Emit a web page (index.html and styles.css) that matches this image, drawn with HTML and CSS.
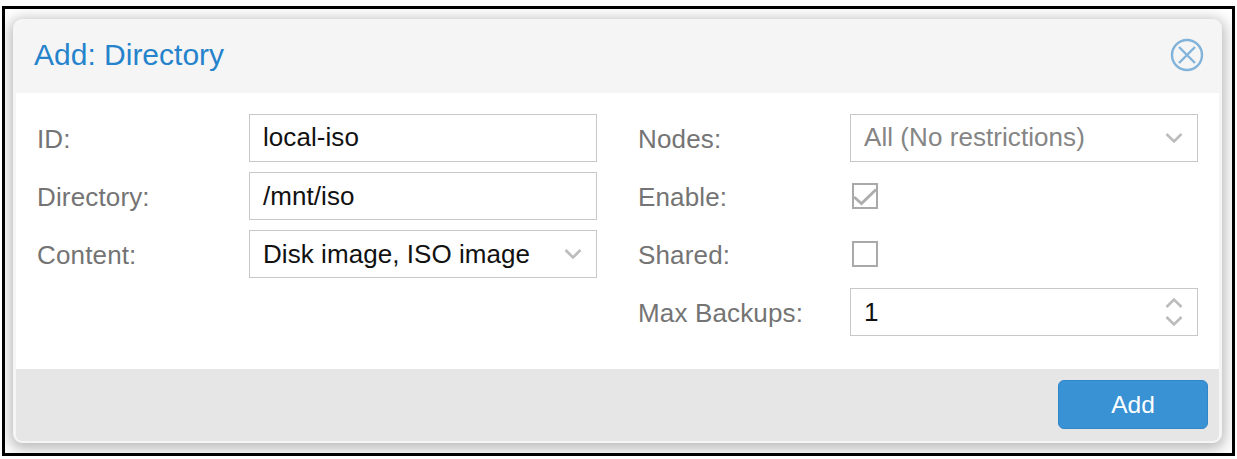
FILE: index.html
```html
<!DOCTYPE html>
<html lang="en">
<head>
<meta charset="utf-8">
<title>Add: Directory</title>
<link rel="stylesheet" href="styles.css">
</head>
<body>
<div class="frame">
  <section class="dialog">
    <header class="header">
      <h1 class="title">Add: Directory</h1>
      <svg class="close" viewBox="0 0 34 34"><circle cx="17" cy="17" r="15"/><path d="M9 9l16 16M25 9L9 25"/></svg>
    </header>
    <div class="form">
      <div class="column">
        <div class="row"><span class="label">ID:</span><div class="field"><span class="value raised">local-iso</span></div></div>
        <div class="row"><span class="label">Directory:</span><div class="field"><span class="value">/mnt/iso</span></div></div>
        <div class="row"><span class="label">Content:</span><div class="field"><span class="value">Disk image, ISO image</span><svg class="chevron" viewBox="0 0 18 12"><path d="M1.5 2L9 9.5L16.5 2"/></svg></div></div>
      </div>
      <div class="column">
        <div class="row"><span class="label">Nodes:</span><div class="field"><span class="value placeholder raised">All (No restrictions)</span><svg class="chevron" viewBox="0 0 18 12"><path d="M1.5 2L9 9.5L16.5 2"/></svg></div></div>
        <div class="row"><span class="label">Enable:</span><div class="checkbox"><svg class="tick" viewBox="0 0 22 22"><path d="M0 12L7.500 18.500L22 4.500"/></svg></div></div>
        <div class="row"><span class="label">Shared:</span><div class="checkbox"></div></div>
        <div class="row"><span class="label">Max Backups:</span><div class="field"><span class="value">1</span><svg class="spinner" viewBox="0 0 18 30"><path d="M1.5 10L9 2.500L16.5 10M1.5 20L9 27.500L16.5 20"/></svg></div></div>
      </div>
    </div>
    <footer class="footer"><button class="submit">Add</button></footer>
  </section>
</div>
</body>
</html>
```
FILE: styles.css
```css
* {
  box-sizing: border-box;
}

body {
  margin: 0;
  padding: 6px 2px 3px;
  height: 459px;
  overflow: hidden;
  background: #fff;
  font-family: "Liberation Sans", Arial, sans-serif;
  font-size: 26px;
}

.frame {
  height: 450px;
  padding: 10px 10px 10px 8px;
  border: 3px solid #000;
  overflow: hidden;
}

.dialog {
  display: flex;
  flex-direction: column;
  height: 424px;
  border: 2px solid #f5f5f5;
  border-width: 2px 3px;
  border-radius: 9px;
  background: #fff;
  box-shadow: 0 3px 14px 3px #bababa;
}

.header {
  display: flex;
  justify-content: space-between;
  height: 72px;
  padding: 17px 15px 0 18px;
  border-radius: 6px 6px 0 0;
  background: #f5f5f5;
}

.title {
  margin: 0;
  color: #2583cc;
  font-size: 30px;
  font-weight: 400;
  line-height: 34px;
}

.close {
  width: 34px;
  height: 34px;
  fill: none;
  stroke: #82b3da;
  stroke-width: 2.4;
}

.form {
  display: flex;
  gap: 41px;
  height: 276px;
  padding: 21px 21px 0;
}

.column {
  display: flex;
  flex-direction: column;
  gap: 10px;
  width: 560px;
}

.row {
  display: flex;
  align-items: center;
  height: 48px;
}

.label {
  width: 212px;
  padding-top: 1px;
  color: #747474;
  letter-spacing: 0.15px;
  line-height: 30px;
}

.field {
  display: flex;
  align-items: center;
  justify-content: space-between;
  width: 348px;
  height: 48px;
  padding: 0 14px 0 13px;
  border: 1px solid #c8c8c8;
}

.value {
  color: #111;
  letter-spacing: 0.06px;
  line-height: 30px;
}

.value.raised {
  padding-bottom: 2px;
}

.value.placeholder {
  color: #858585;
}

.chevron,
.spinner {
  width: 18px;
  fill: none;
  stroke: #bcbcbc;
  stroke-width: 2.6;
}

.checkbox {
  width: 26px;
  height: 26px;
  margin-left: 2px;
  border: 2px solid #a9a9a9;
}

.tick {
  display: block;
  width: 22px;
  height: 22px;
  fill: none;
  stroke: #adadad;
  stroke-width: 2.8;
}

.footer {
  display: flex;
  justify-content: flex-end;
  flex: 1;
  padding: 11px 11px 0;
  border-radius: 0 0 6px 6px;
  background: #e6e6e6;
}

.submit {
  width: 150px;
  height: 49px;
  padding: 0;
  border: 1px solid #2f86c8;
  border-radius: 6px;
  background: #3892d4;
  color: #fff;
  font: 24.5px "Liberation Sans", Arial, sans-serif;
}
```
